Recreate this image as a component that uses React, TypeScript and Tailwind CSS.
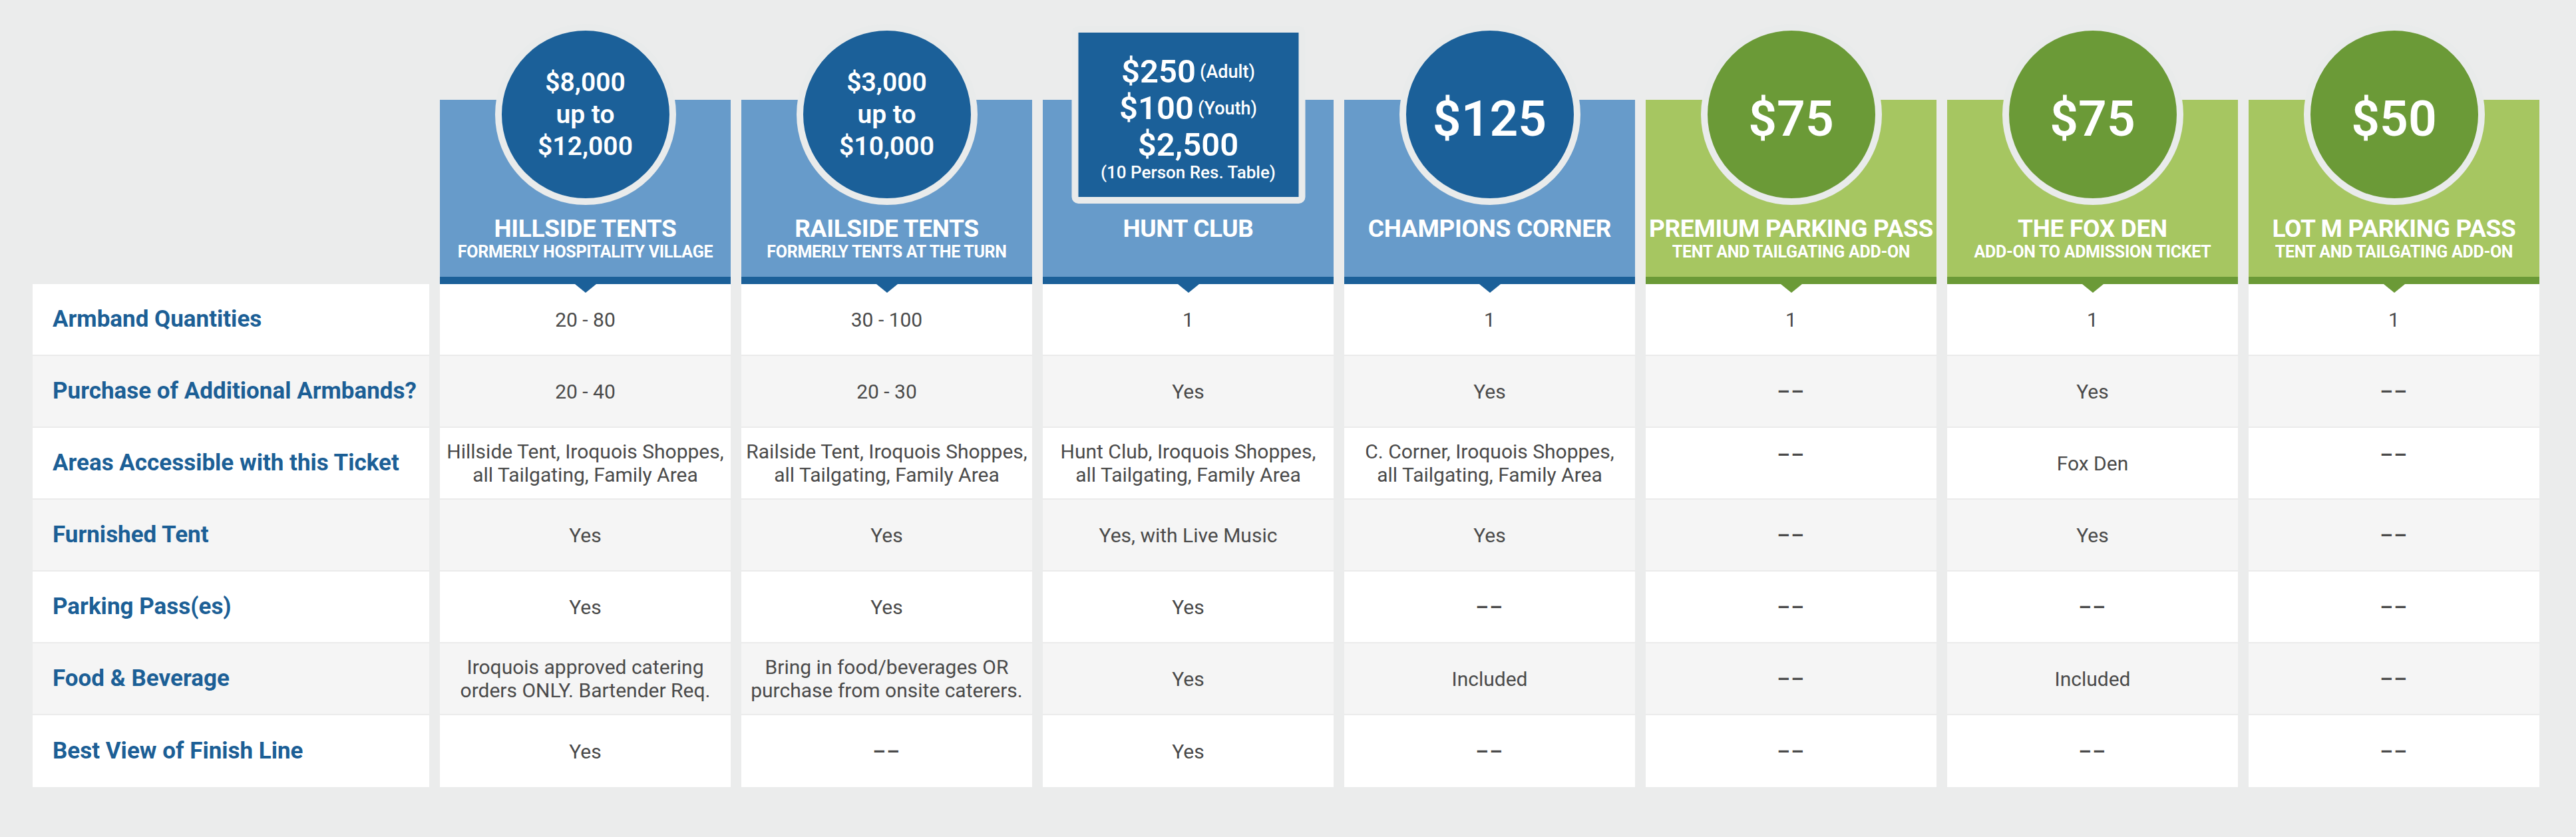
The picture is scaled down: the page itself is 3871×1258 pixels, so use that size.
import type { ReactNode } from "react"

type Tone = "blue" | "green"

type Column = {
  name: string
  sub?: string
  tone: Tone
  price: ReactNode
  box?: boolean
}

type Cell = string | string[]

const tones = {
  blue: {
    band: "bg-[#679bca] border-[#1b6099]",
    dark: "bg-[#1b6099]",
    arrow: "border-t-[#1b6099]",
  },
  green: {
    band: "bg-[#a6c661] border-[#6b9a37]",
    dark: "bg-[#6b9a37]",
    arrow: "border-t-[#6b9a37]",
  },
}

const Stack = ({ lines }: { lines: string[] }) => (
  <div className="flex flex-col items-center text-[39px] font-semibold leading-[48px]">
    {lines.map((l) => (
      <span key={l}>{l}</span>
    ))}
  </div>
)

const Big = ({ value }: { value: string }) => (
  <span className="pt-[12px] text-[75px] font-semibold leading-none">{value}</span>
)

// hunt club price line: big amount with the small note centred beside it
const Line = ({ amount, note }: { amount: string; note?: string }) => (
  <div className="flex h-[55px] items-center justify-center gap-[6px] whitespace-nowrap">
    <span className="text-[49px] font-semibold leading-none">{amount}</span>
    {note && <span className="pt-[2px] text-[27px] font-medium leading-none">{note}</span>}
  </div>
)

const columns: Column[] = [
  {
    name: "HILLSIDE TENTS",
    sub: "FORMERLY HOSPITALITY VILLAGE",
    tone: "blue",
    price: <Stack lines={["$8,000", "up to", "$12,000"]} />,
  },
  {
    name: "RAILSIDE TENTS",
    sub: "FORMERLY TENTS AT THE TURN",
    tone: "blue",
    price: <Stack lines={["$3,000", "up to", "$10,000"]} />,
  },
  {
    name: "HUNT CLUB",
    tone: "blue",
    box: true,
    price: (
      <div className="flex flex-col items-center pt-[8px]">
        <Line amount="$250" note="(Adult)" />
        <Line amount="$100" note="(Youth)" />
        <Line amount="$2,500" />
        <span className="text-[26px] font-medium leading-[28px]">(10 Person Res. Table)</span>
      </div>
    ),
  },
  { name: "CHAMPIONS CORNER", tone: "blue", price: <Big value="$125" /> },
  {
    name: "PREMIUM PARKING PASS",
    sub: "TENT AND TAILGATING ADD-ON",
    tone: "green",
    price: <Big value="$75" />,
  },
  {
    name: "THE FOX DEN",
    sub: "ADD-ON TO ADMISSION TICKET",
    tone: "green",
    price: <Big value="$75" />,
  },
  {
    name: "LOT M PARKING PASS",
    sub: "TENT AND TAILGATING ADD-ON",
    tone: "green",
    price: <Big value="$50" />,
  },
]

const areas = (first: string) => [first, "all Tailgating, Family Area"]

const rows: { label: string; cells: Cell[]; lift?: boolean }[] = [
  { label: "Armband Quantities", cells: ["20 - 80", "30 - 100", "1", "1", "1", "1", "1"] },
  {
    label: "Purchase of Additional Armbands?",
    cells: ["20 - 40", "20 - 30", "Yes", "Yes", "--", "Yes", "--"],
  },
  {
    label: "Areas Accessible with this Ticket",
    lift: true,
    cells: [
      areas("Hillside Tent, Iroquois Shoppes,"),
      areas("Railside Tent, Iroquois Shoppes,"),
      areas("Hunt Club, Iroquois Shoppes,"),
      areas("C. Corner, Iroquois Shoppes,"),
      "--",
      "Fox Den",
      "--",
    ],
  },
  {
    label: "Furnished Tent",
    cells: ["Yes", "Yes", "Yes, with Live Music", "Yes", "--", "Yes", "--"],
  },
  { label: "Parking Pass(es)", cells: ["Yes", "Yes", "Yes", "--", "--", "--", "--"] },
  {
    label: "Food & Beverage",
    cells: [
      ["Iroquois approved catering", "orders ONLY. Bartender Req."],
      ["Bring in food/beverages OR", "purchase from onsite caterers."],
      "Yes",
      "Included",
      "--",
      "Included",
      "--",
    ],
  },
  { label: "Best View of Finish Line", cells: ["Yes", "--", "Yes", "--", "--", "--", "--"] },
]

const Header = ({ col }: { col: Column }) => {
  const t = tones[col.tone]
  return (
    <div className={`relative mt-[150px] h-[277px] border-b-[11px] ${t.band}`}>
      {col.box ? (
        <div
          className={`absolute left-1/2 top-[-111px] flex h-[267px] w-[351px] -translate-x-1/2 items-center justify-center rounded-[10px] border-[10px] border-[#e9ebeb] text-white ${t.dark}`}
        >
          {col.price}
        </div>
      ) : (
        <div
          className={`absolute left-1/2 top-[-114px] flex size-[272px] -translate-x-1/2 items-center justify-center rounded-full border-[10px] border-[#e9ebeb] text-white ${t.dark}`}
        >
          {col.price}
        </div>
      )}
      <div className="flex flex-col items-center pt-[172px] text-white">
        <span className="whitespace-nowrap text-[37px] font-bold leading-[44px] tracking-[-0.3px]">
          {col.name}
        </span>
        {col.sub && (
          <span className="whitespace-nowrap text-[25px] font-bold leading-[26px] tracking-[-0.3px]">
            {col.sub}
          </span>
        )}
      </div>
      <div
        className={`absolute left-1/2 top-[277px] z-10 h-0 w-0 -translate-x-1/2 border-x-[16px] border-t-[13px] border-x-transparent ${t.arrow}`}
      />
    </div>
  )
}

const App = () => {
  return (
    <div className="min-h-[1258px] w-full bg-[#ebecec] [font-family:Roboto,'Liberation_Sans',sans-serif]">
      <div className="grid grid-cols-[596px_repeat(7,437px)] gap-x-4 pl-[49px]">
        <div />
        {columns.map((col) => (
          <Header key={col.name} col={col} />
        ))}

        {rows.map((row, r) => {
          const bg = r % 2 === 0 ? "bg-white" : "bg-[#f5f5f5]"
          const edge = r < rows.length - 1 ? "border-b-2 border-[#ebebeb]" : ""
          return [
            <div
              key={row.label}
              className={`flex h-[108px] items-center pl-[30px] text-[35px] font-bold text-[#1c5f96] ${bg} ${edge}`}
            >
              <span className="whitespace-nowrap">{row.label}</span>
            </div>,
            ...row.cells.map((cell, c) => {
              const dash = cell === "--"
              return (
                <div
                  key={`${r}-${c}`}
                  className={`flex h-[108px] flex-col items-center justify-center text-center text-[30px] leading-[35px] text-[#4a4a4a] ${bg} ${edge} ${
                    dash && row.lift ? "pb-[26px]" : ""
                  }`}
                >
                  {Array.isArray(cell) ? (
                    cell.map((line) => (
                      <span key={line} className="whitespace-nowrap">
                        {line}
                      </span>
                    ))
                  ) : (
                    <span className={`whitespace-nowrap ${dash ? "font-bold tracking-[2px]" : ""}`}>
                      {dash ? "––" : cell}
                    </span>
                  )}
                </div>
              )
            }),
          ]
        })}
      </div>
    </div>
  )
}

export default App
